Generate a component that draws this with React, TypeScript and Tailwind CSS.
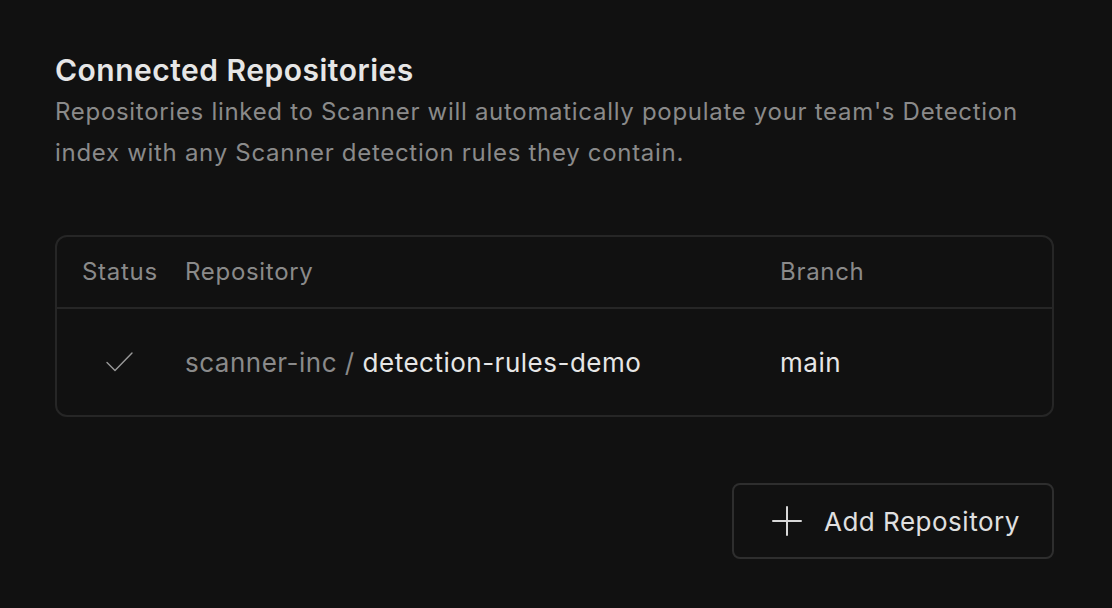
const font = { fontFamily: "Inter, 'Noto Sans', sans-serif" };

function CheckMark() {
  return (
    <svg width="27" height="20" viewBox="0 0 27 20" fill="none" className="text-[#9a9a9a]">
      <path d="M1 10.5 9 18.5 26 1" stroke="currentColor" strokeWidth="1.4" strokeLinecap="round" strokeLinejoin="round" />
    </svg>
  );
}

function PlusMark() {
  return (
    <svg width="30" height="30" viewBox="0 0 30 30" fill="none" className="text-[#d8d8d8]">
      <path d="M15 1v28M1 15h28" stroke="currentColor" strokeWidth="2" strokeLinecap="round" />
    </svg>
  );
}

export default function App() {
  return (
    <div
      className="min-h-[608px] w-full bg-[#111111] px-[55px] pt-[52px] pb-[49px]"
      style={font}
    >
      <h2 className="text-[30px] leading-[36px] font-semibold tracking-[0.5px] text-[#e6e6e6]">
        Connected Repositories
      </h2>
      <p className="mt-[3px] max-w-[990px] text-[24px] leading-[41px] tracking-[0.7px] text-[#8a8a8a]">
        Repositories linked to Scanner will automatically populate your team's Detection index with
        any Scanner detection rules they contain.
      </p>

      <div className="mt-[62px] w-[999px] rounded-[12px] border-2 border-[#262626]">
        <div className="flex h-[72px] items-center border-b-2 border-[#262626] text-[24px] tracking-[0.7px] text-[#8a8a8a]">
          <div className="w-[128px] pl-[25px]">Status</div>
          <div className="w-[595px]">Repository</div>
          <div>Branch</div>
        </div>
        <div className="flex h-[106px] items-center text-[26px] tracking-[0.5px]">
          <div className="flex w-[128px] justify-center pr-[4px]">
            <CheckMark />
          </div>
          <div className="w-[595px]">
            <span className="text-[#8a8a8a]">scanner-inc / </span>
            <span className="text-[#e6e6e6]">detection-rules-demo</span>
          </div>
          <div className="text-[#e6e6e6]">main</div>
        </div>
      </div>

      <div className="mt-[66px] flex w-[999px] justify-end">
        <button className="flex h-[76px] w-[322px] items-center rounded-[8px] border-2 border-[#2e2e2e] pl-[38px] text-[26px] tracking-[0.5px] text-[#e0e0e0]">
          <PlusMark />
          <span className="ml-[22px]">Add Repository</span>
        </button>
      </div>
    </div>
  );
}
